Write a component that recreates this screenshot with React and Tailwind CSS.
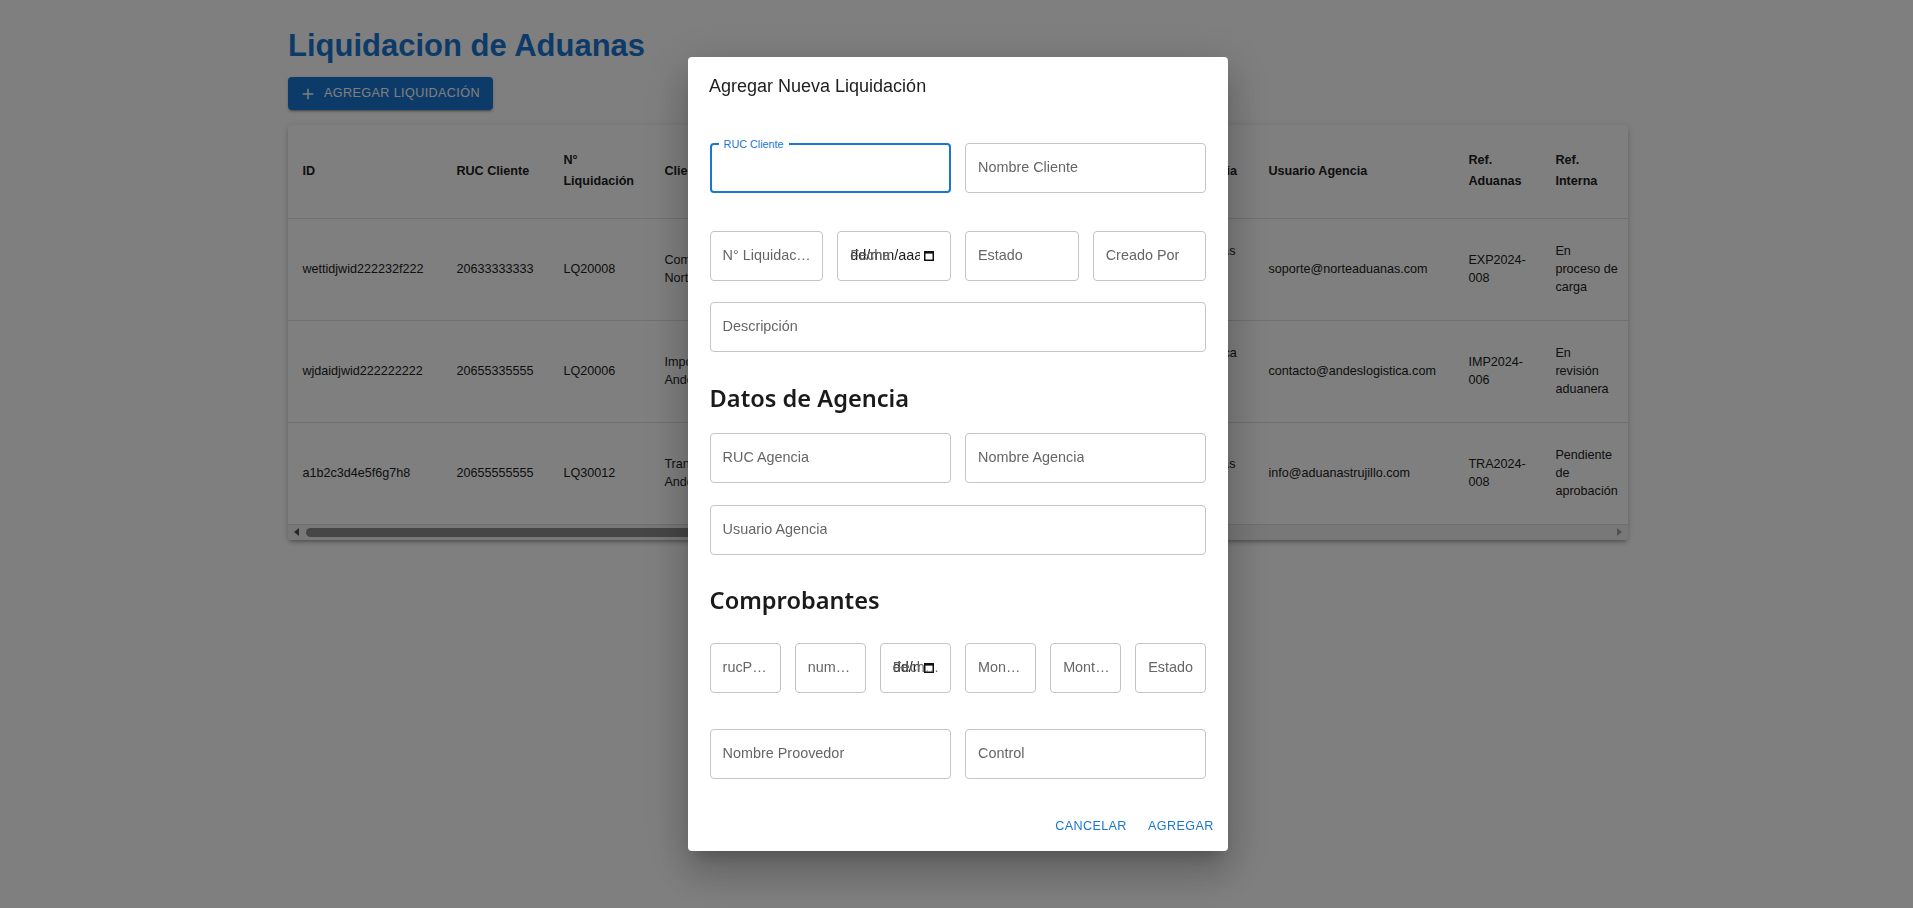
import React from 'react';

const rows = [
  {
    id: 'wettidjwid222232f222',
    ruc: '20633333333',
    liq: 'LQ20008',
    cliente: ['Comercial del', 'Norte SAC'],
    fecha: '2024-05-12',
    estado: 'Activo',
    rucAgencia: '20512345678',
    agencia: ['Agencia Aduanas', 'del Norte', 'S.A.C.'],
    usuario: 'soporte@norteaduanas.com',
    refAduanas: ['EXP2024-', '008'],
    refInterna: ['En', 'proceso de', 'carga'],
  },
  {
    id: 'wjdaidjwid222222222',
    ruc: '20655335555',
    liq: 'LQ20006',
    cliente: ['Importadora', 'Andes SAC'],
    fecha: '2024-04-03',
    estado: 'Activo',
    rucAgencia: '20587654321',
    agencia: ['Agencia Logística', 'Andes', 'S.A.C.'],
    usuario: 'contacto@andeslogistica.com',
    refAduanas: ['IMP2024-', '006'],
    refInterna: ['En', 'revisión', 'aduanera'],
  },
  {
    id: 'a1b2c3d4e5f6g7h8',
    ruc: '20655555555',
    liq: 'LQ30012',
    cliente: ['Transportes', 'Andes EIRL'],
    fecha: '2024-06-21',
    estado: 'Pendiente',
    rucAgencia: '20599998888',
    agencia: ['Agencia Aduanas', 'Trujillo'],
    usuario: 'info@aduanastrujillo.com',
    refAduanas: ['TRA2024-', '008'],
    refInterna: ['Pendiente', 'de', 'aprobación'],
  },
];

const Lines = ({ items }) => (
  <>
    {items.map((t, i) => (
      <div key={i} className="whitespace-nowrap">{t}</div>
    ))}
  </>
);

const Field = ({ label }) => (
  <div className="h-[50px] min-w-0 rounded-[4px] border border-[#c4c4c4] flex items-center pl-[12px] pr-[10px]">
    <span className="truncate text-[14.4px] text-[#666]">{label}</span>
  </div>
);

const CalendarIcon = () => (
  <svg width="10" height="11" viewBox="0 0 10 11" className="shrink-0">
    <rect x="0.75" y="1.75" width="8.5" height="8.5" fill="none" stroke="#111" strokeWidth="1.5" />
    <rect x="0" y="1" width="10" height="2.6" fill="#111" />
  </svg>
);

const DateField = ({ label }) => (
  <div className="relative h-[50px] min-w-0 rounded-[4px] border border-[#c4c4c4] flex items-center pl-[12px] pr-[16px]">
    <span className="flex-1 min-w-0 overflow-hidden whitespace-nowrap text-[14.4px] text-[#1e1e1e]">dd/mm/aaaa</span>
    <span className="ml-[4px]">
      <CalendarIcon />
    </span>
    <span className="absolute left-[12px] top-1/2 -translate-y-1/2 max-w-[calc(100%-22px)] truncate text-[14.4px] text-[#666]">
      {label}
    </span>
  </div>
);

export default function App() {
  return (
    <div className="min-h-screen bg-white font-['Liberation_Sans',Arial,sans-serif]">
      <div className="w-[1340px] ml-[288px] pt-[27px]">
        <h1 className="text-[31px] leading-[38px] font-bold text-[#1976d2]">Liquidacion de Aduanas</h1>
        <button className="mt-[12px] h-[33px] w-[205px] rounded-[4px] bg-[#1976d2] text-white flex items-center pl-[11px] shadow-[0px_3px_1px_-2px_rgba(0,0,0,0.2),0px_2px_2px_0px_rgba(0,0,0,0.14),0px_1px_5px_0px_rgba(0,0,0,0.12)]">
          <svg width="18" height="18" viewBox="0 0 24 24" fill="currentColor">
            <path d="M19 13h-6v6h-2v-6H5v-2h6V5h2v6h6v2z" />
          </svg>
          <span className="ml-[7px] text-[12.6px] font-medium uppercase tracking-[0.4px]">Agregar Liquidación</span>
        </button>

        <div className="mt-[15px] rounded-[4px] bg-white shadow-[0px_3px_3px_-2px_rgba(0,0,0,0.2),0px_3px_4px_0px_rgba(0,0,0,0.14),0px_1px_8px_0px_rgba(0,0,0,0.12)] overflow-hidden">
          <div className="overflow-hidden">
            <table className="table-fixed border-collapse w-[1473px] text-[12.6px] text-[#212121]">
              <colgroup>
                <col className="w-[154px]" />
                <col className="w-[107px]" />
                <col className="w-[101px]" />
                <col className="w-[140px]" />
                <col className="w-[100px]" />
                <col className="w-[110px]" />
                <col className="w-[123px]" />
                <col className="w-[131px]" />
                <col className="w-[200px]" />
                <col className="w-[87px]" />
                <col className="w-[100px]" />
                <col className="w-[120px]" />
              </colgroup>
              <thead>
                <tr className="h-[93px] border-b border-[#e0e0e0] text-left font-bold leading-[21px]">
                  <th className="px-[14.4px]">ID</th>
                  <th className="px-[14.4px] whitespace-nowrap">RUC Cliente</th>
                  <th className="px-[14.4px]"><Lines items={['N°', 'Liquidación']} /></th>
                  <th className="px-[14.4px]">Cliente</th>
                  <th className="px-[14.4px]">Fecha</th>
                  <th className="px-[14.4px]">Estado</th>
                  <th className="px-[14.4px]"><Lines items={['RUC', 'Agencia']} /></th>
                  <th className="px-[14.4px] whitespace-nowrap">Nombre Agencia</th>
                  <th className="px-[14.4px]">Usuario Agencia</th>
                  <th className="px-[14.4px]"><Lines items={['Ref.', 'Aduanas']} /></th>
                  <th className="px-[14.4px]"><Lines items={['Ref.', 'Interna']} /></th>
                  <th className="px-[14.4px]">Acciones</th>
                </tr>
              </thead>
              <tbody className="leading-[18px]">
                {rows.map((r) => (
                  <tr key={r.id} className="h-[102px] border-b border-[#e0e0e0]">
                    <td className="px-[14.4px] whitespace-nowrap">{r.id}</td>
                    <td className="px-[14.4px]">{r.ruc}</td>
                    <td className="px-[14.4px]">{r.liq}</td>
                    <td className="px-[14.4px]"><Lines items={r.cliente} /></td>
                    <td className="px-[14.4px]">{r.fecha}</td>
                    <td className="px-[14.4px]">{r.estado}</td>
                    <td className="px-[14.4px]">{r.rucAgencia}</td>
                    <td className="px-[14.4px]"><Lines items={r.agencia} /></td>
                    <td className="px-[14.4px] whitespace-nowrap">{r.usuario}</td>
                    <td className="px-[14.4px]"><Lines items={r.refAduanas} /></td>
                    <td className="px-[14.4px]"><Lines items={r.refInterna} /></td>
                    <td className="px-[14.4px]">Editar</td>
                  </tr>
                ))}
              </tbody>
            </table>
          </div>
          <div className="h-[15px] bg-[#f1f1f1] flex items-center">
            <div className="w-[18px] flex justify-center">
              <svg width="6" height="8" viewBox="0 0 6 8"><path d="M5 0v8L0 4z" fill="#505050" /></svg>
            </div>
            <div className="h-[9px] w-[720px] rounded-full bg-[#8c8c8c]" />
            <div className="flex-1" />
            <div className="w-[18px] flex justify-center">
              <svg width="6" height="8" viewBox="0 0 6 8"><path d="M1 0v8l5-4z" fill="#a3a3a3" /></svg>
            </div>
          </div>
        </div>
      </div>

      <div className="fixed inset-0 bg-black/50 flex items-center justify-center pl-[3px]">
        <div className="w-[540px] rounded-[4px] bg-white shadow-[0px_11px_15px_-7px_rgba(0,0,0,0.2),0px_24px_38px_3px_rgba(0,0,0,0.14),0px_9px_46px_8px_rgba(0,0,0,0.12)] flex flex-col">
          <div className="px-[21px] pt-[14.4px] pb-[14.4px] text-[18px] leading-[28.8px] text-[#212121]">
            Agregar Nueva Liquidación
          </div>
          <div className="px-[21.6px]">
            <div className="mt-[28px] grid grid-cols-2 gap-x-[14px]">
              <div className="relative h-[50px] rounded-[4px] border-2 border-[#1976d2]">
                <span className="absolute -top-[8px] left-[7px] bg-white px-[5px] text-[10.8px] leading-[14px] text-[#1976d2]">
                  RUC Cliente
                </span>
              </div>
              <Field label="Nombre Cliente" />
            </div>
            <div className="mt-[38px] grid grid-cols-4 gap-x-[14px]">
              <Field label="N° Liquidación" />
              <DateField label="Fecha" />
              <Field label="Estado" />
              <Field label="Creado Por" />
            </div>
            <div className="mt-[21px]">
              <Field label="Descripción" />
            </div>

            <h2 className="mt-[30px] h-[32px] leading-[32px] text-[23.6px] font-semibold text-[#1a1a1a] font-['Noto_Sans',sans-serif]">
              Datos de Agencia
            </h2>
            <div className="mt-[19px] grid grid-cols-2 gap-x-[14px]">
              <Field label="RUC Agencia" />
              <Field label="Nombre Agencia" />
            </div>
            <div className="mt-[22px]">
              <Field label="Usuario Agencia" />
            </div>

            <h2 className="mt-[29px] h-[32px] leading-[32px] text-[23.6px] font-semibold text-[#1a1a1a] font-['Noto_Sans',sans-serif]">
              Comprobantes
            </h2>
            <div className="mt-[27px] grid grid-cols-6 gap-x-[14px]">
              <Field label="rucProveedor" />
              <Field label="numeroComprobante" />
              <DateField label="Fecha Emisión" />
              <Field label="Moneda" />
              <Field label="Monto Total" />
              <Field label="Estado" />
            </div>
            <div className="mt-[36px] grid grid-cols-2 gap-x-[14px]">
              <Field label="Nombre Proovedor" />
              <Field label="Control" />
            </div>
          </div>
          <div className="mt-[31px] mb-[8px] h-[33px] flex items-center justify-end gap-[7px] px-[7.2px]">
            <button className="h-[33px] px-[7.2px] text-[12.6px] font-medium uppercase tracking-[0.36px] text-[#1976d2]">Cancelar</button>
            <button className="h-[33px] px-[7.2px] text-[12.6px] font-medium uppercase tracking-[0.36px] text-[#1976d2]">Agregar</button>
          </div>
        </div>
      </div>
    </div>
  );
}
